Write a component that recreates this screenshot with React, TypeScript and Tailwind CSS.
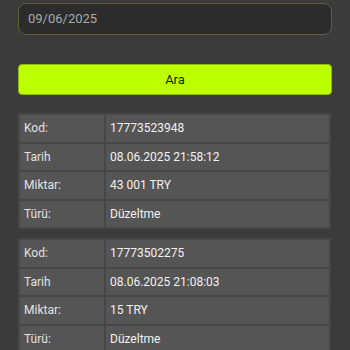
import React from "react";

type Tx = { kod: string; tarih: string; miktar: string; turu: string };

const data: Tx[] = [
  { kod: "17773523948", tarih: "08.06.2025 21:58:12", miktar: "43 001 TRY", turu: "Düzeltme" },
  { kod: "17773502275", tarih: "08.06.2025 21:08:03", miktar: "15 TRY", turu: "Düzeltme" },
];

function Row({ label, value }: { label: string; value: string }) {
  return (
    <>
      <div className="h-[26.5px] bg-[#555555] pl-[4px] flex items-center text-[12px] text-[#e2e2e2]">{label}</div>
      <div className="h-[26.5px] bg-[#555555] pl-[4px] flex items-center text-[12px] text-[#f2f2f2]">{value}</div>
    </>
  );
}

export default function App() {
  return (
    <div
      className="w-[350px] h-[350px] overflow-hidden bg-[#3b3b3b] px-[18px] pt-[3px]"
      style={{ fontFamily: "Roboto, 'Noto Sans', sans-serif" }}
    >
      <div className="h-[32px] rounded-[8px] border border-[#5f6132] bg-[#2c2c2c] flex items-center pl-[9px] text-[13px] text-[#a8a8a8]">
        09/06/2025
      </div>
      <button className="mt-[29px] w-full h-[31px] rounded-[4px] bg-[#bbff00] border border-[#8fb800] flex items-center justify-center text-[13px] text-[#1a1a1a]">
        Ara
      </button>
      <div className="mt-[18px] flex flex-col gap-[9px]">
        {data.map((t) => (
          <div key={t.kod} className="grid grid-cols-[84px_1fr] gap-[2px] p-[2px] bg-[#474747] mr-[1px] ml-[0px]">
            <Row label="Kod:" value={t.kod} />
            <Row label="Tarih" value={t.tarih} />
            <Row label="Miktar:" value={t.miktar} />
            <Row label="Türü:" value={t.turu} />
          </div>
        ))}
      </div>
    </div>
  );
}
